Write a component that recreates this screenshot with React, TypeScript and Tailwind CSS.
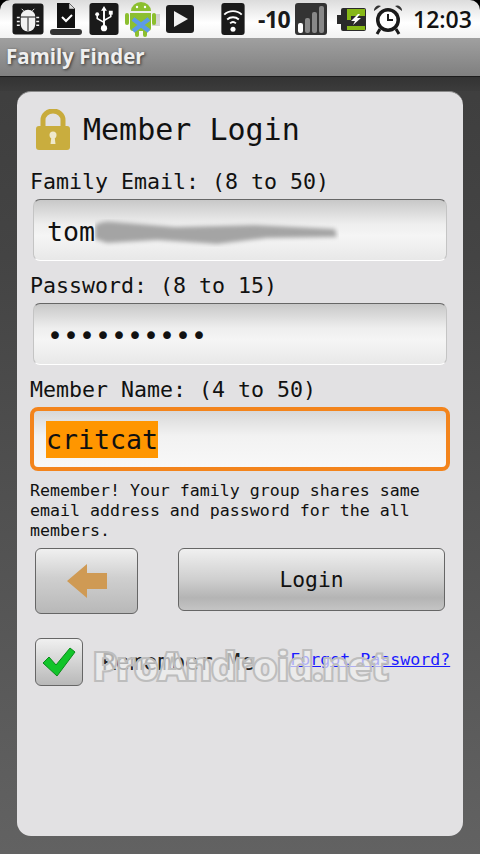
import React from "react";

const MONO = "font-['DejaVu_Sans_Mono','Liberation_Mono',monospace]";
const SANS = "font-['Open_Sans','Noto_Sans',sans-serif]";

function StatusIcons() {
  return (
    <>
      {/* debug bug */}
      <svg width="32" height="32" viewBox="0 0 33 33" className="ml-[12px] shrink-0">
        <rect x="0.5" y="0.5" width="32" height="32" rx="3" fill="#1a1a1a" />
        <path d="M9 14a7.5 7 0 0 1 15 0z" fill="#f2f2f2" />
        <path d="M9 15h15v7a7.5 7.5 0 0 1-15 0z" fill="#f2f2f2" />
        <path d="M12 8l-2-2M21 8l2-2" stroke="#f2f2f2" strokeWidth="1" />
        <path d="M16.5 15v14" stroke="#1a1a1a" strokeWidth="1" />
        <path d="M5 15h3M5 19h3M5 23h3M25 15h3M25 19h3M25 23h3" stroke="#f2f2f2" strokeWidth="1.5" />
      </svg>
      {/* download done */}
      <svg width="32" height="32" viewBox="0 0 32 32" className="ml-[6px] shrink-0">
        <path d="M7 0h12l6 6v19H7z" fill="#111" />
        <path d="M19 0l6 6h-6z" fill="#ddd" stroke="#222" strokeWidth="0.5" />
        <path d="M12 14l4 4 6-6" fill="none" stroke="#fff" strokeWidth="2" />
        <rect x="0" y="26" width="32" height="6" rx="3" fill="#333" />
      </svg>
      {/* usb */}
      <svg width="30" height="32" viewBox="0 0 30 33" className="ml-[7px] shrink-0">
        <rect x="0" y="0" width="30" height="33" rx="3" fill="#1a1a1a" />
        <path d="M15 3l3 5h-2v16h-2V8h-2z" fill="#fff" />
        <circle cx="15" cy="26" r="3.2" fill="#fff" />
        <path d="M15 20l-7-4v-3M15 18l7-4v-3" fill="none" stroke="#fff" strokeWidth="1.6" />
        <circle cx="8" cy="11.5" r="2" fill="#fff" />
        <rect x="20" y="8" width="4" height="4" fill="#fff" />
      </svg>
      {/* android with blue x */}
      <svg width="36" height="38" viewBox="0 0 36 38" className="ml-[5px] shrink-0">
        <path d="M28 14h8v12h-8z" fill="#000" opacity="0.15" />
        <path d="M7 11a10 9 0 0 1 20 0z" fill="#8cbf2f" />
        <path d="M6 13h21v15a3 3 0 0 1-3 3H9a3 3 0 0 1-3-3z" fill="#8cbf2f" />
        <rect x="1" y="13" width="4" height="12" rx="2" fill="#8cbf2f" />
        <rect x="28" y="13" width="4" height="12" rx="2" fill="#8cbf2f" />
        <rect x="11" y="29" width="4" height="8" rx="2" fill="#8cbf2f" />
        <rect x="19" y="29" width="4" height="8" rx="2" fill="#8cbf2f" />
        <circle cx="13" cy="7" r="1.2" fill="#fff" />
        <circle cx="21" cy="7" r="1.2" fill="#fff" />
        <path d="M9 19l16 12M25 19L9 31" stroke="#5c9be8" strokeWidth="4.5" />
      </svg>
      {/* play */}
      <svg width="28" height="28" viewBox="0 0 28 28" className="ml-[6px] shrink-0">
        <rect x="0" y="0" width="28" height="28" rx="3" fill="#1c1c1c" />
        <path d="M8 6l14 8-14 8z" fill="#f2f2f2" />
      </svg>
      {/* wifi */}
      <svg width="24" height="32" viewBox="0 0 24 33" className="ml-[27px] shrink-0">
        <rect x="0" y="0" width="24" height="33" rx="3" fill="#1a1a1a" />
        <path d="M3 12a13 13 0 0 1 18 0M6 17a9 9 0 0 1 12 0M9 21a4.5 4.5 0 0 1 6 0" fill="none" stroke="#fff" strokeWidth="2" />
        <circle cx="12" cy="27" r="2.6" fill="#fff" />
      </svg>
      <span className={`${SANS} ml-[13px] w-[37px] shrink-0 font-bold text-[23px] leading-none text-[#1a1a1a] tracking-[-0.5px]`}>-10</span>
      {/* signal */}
      <svg width="32" height="32" viewBox="0 0 32 32" className="shrink-0">
        <rect x="0" y="0" width="32" height="32" rx="3" fill="#333" />
        <rect x="3" y="20" width="5" height="10" rx="2" fill="#fff" />
        <rect x="10" y="15" width="5" height="15" rx="2" fill="#888" />
        <rect x="17" y="9" width="5" height="21" rx="2" fill="#888" />
        <rect x="24" y="3" width="5" height="27" rx="2" fill="#888" />
      </svg>
      {/* battery charging */}
      <svg width="29" height="23" viewBox="0 0 29 23" className="ml-[10px] shrink-0">
        <path d="M6 0h21a2 2 0 0 1 2 2v19a2 2 0 0 1-2 2H6a2 2 0 0 1-2-2v-5H0V7h4V2a2 2 0 0 1 2-2z" fill="#2a2a2a" />
        <path d="M10 1h18v7H14v4h-4zM10 18h18v4H10z" fill="#86b817" />
        <path d="M21 6l-7 7h4l-2 4 8-7h-4l3-4z" fill="#fff" />
      </svg>
      {/* alarm */}
      <svg width="30" height="32" viewBox="0 0 30 32" className="ml-[7px] shrink-0">
        <path d="M1 8a5 5 0 0 1 7-5zM29 8a5 5 0 0 0-7-5z" fill="#333" />
        <circle cx="15" cy="17" r="12" fill="#1a1a1a" />
        <circle cx="15" cy="17" r="8.5" fill="#fff" />
        <path d="M15 11v6h5" fill="none" stroke="#1a1a1a" strokeWidth="2" />
        <path d="M7 26l-3 5M23 26l3 5" stroke="#1a1a1a" strokeWidth="3" />
      </svg>
      <span className={`${SANS} ml-[10px] font-semibold text-[23px] leading-none text-[#111] whitespace-nowrap`}>12:03</span>
    </>
  );
}

function Field({ label, children, focused }: { label: string; children: React.ReactNode; focused?: boolean }) {
  return (
    <div className="flex flex-col">
      <div className={`${MONO} h-[34px] pl-[13px] text-[21.6px] leading-[34px] text-[#111] whitespace-nowrap`}>{label}</div>
      {focused ? (
        <div className="mx-[13px] h-[64px] rounded-[8px] border-[4px] border-[#f3841c] bg-[linear-gradient(#d8d8d8,#f2f2f2_45%,#f8f8f8)] pl-[12px] flex items-center">
          {children}
        </div>
      ) : (
        <div className="mx-[16px] h-[62px] rounded-[7px] border-t border-t-[#666] border-x border-x-[#c4c4c4] border-b border-b-white bg-[linear-gradient(#c8c8c8,#eeeeee_40%,#f5f5f5_60%,#e8e8e8)] pl-[13px] pt-[4px] flex items-center">
          {children}
        </div>
      )}
    </div>
  );
}

export default function App() {
  return (
    <div className="relative flex h-[854px] w-[480px] flex-col overflow-hidden bg-[linear-gradient(#3c3c3c,#444_30%,#626262)]">
      <div className="relative h-[38px] shrink-0 bg-black">
        <div className="flex h-[38px] items-center rounded-t-[10px] bg-[linear-gradient(#dcdcdc,#ffffff_60%,#f2f2f2)]">
          <StatusIcons />
        </div>
      </div>
      <div className={`${SANS} h-[38px] shrink-0 bg-[linear-gradient(#a0a0a0,#7f7f7f)] pl-[6px] text-[20.5px] font-bold leading-[37px] text-[#efefef] [text-shadow:1px_1px_3px_#333]`}>
        Family Finder
      </div>
      <div className="h-[15px] shrink-0 border-t border-t-[#1c1c1c] bg-[linear-gradient(#333,#3c3c3c)]" />

      <div className="mx-[17px] h-[745px] shrink-0 rounded-[14px] border-t border-t-[#8a8a8a] bg-[#e2e1e3]">
        <div className="flex h-[73px] items-center pl-[18px] pt-[2px]">
          <svg width="36" height="42" viewBox="0 0 36 42" className="shrink-0">
            <path d="M8 20V11a10 9 0 0 1 20 0v9" fill="none" stroke="#c8ab3c" strokeWidth="5" />
            <rect x="1" y="17" width="34" height="24" rx="3" fill="#c9ad3e" />
            <circle cx="18" cy="26" r="3.5" fill="#efe9cc" />
            <path d="M16.5 27h3l1 8h-5z" fill="#efe9cc" />
          </svg>
          <span className={`${MONO} ml-[12px] text-[30px] leading-none text-[#111] whitespace-nowrap`}>Member Login</span>
        </div>

        <div className="flex flex-col gap-[8px]">
          <Field label="Family Email: (8 to 50)">
            <span className={`${MONO} text-[26.6px] leading-none text-[#111]`}>tom</span>
            {/* redacted part of the address */}
            <svg width="244" height="30" viewBox="0 0 244 30" className="shrink-0">
              <defs>
                <filter id="smudge"><feGaussianBlur stdDeviation="2" /></filter>
              </defs>
              <path d="M0 8q8-5 20-3l60 5 80-2 80 4 2 8-70 1-50 6-60-4-50 3-12-4z" fill="#a4a4a4" filter="url(#smudge)" />
            </svg>
          </Field>
          <Field label="Password: (8 to 15)">
            <span className={`${MONO} text-[26.6px] leading-none text-[#111]`}>••••••••••</span>
          </Field>
          <Field label="Member Name: (4 to 50)" focused>
            <span className={`${MONO} bg-[#ff9600] text-[26.6px] leading-[37px] text-[#111]`}>critcat</span>
          </Field>
        </div>

        <p className={`${MONO} mt-[10px] pl-[13px] pr-[20px] text-[16.6px] leading-[20px] text-[#111]`}>
          Remember! Your family group shares same email address and password for the all members.
        </p>

        <div className="mt-[7px] flex items-start pl-[18px]">
          <button className="flex h-[66px] w-[103px] items-center justify-center rounded-[6px] border border-[#666] bg-[linear-gradient(#f0f0f0,#cfcfcf_45%,#b8b8b8)]">
            <svg width="40" height="34" viewBox="0 0 40 34">
              <path d="M0 17L20 0v9h20v16H20v9z" fill="#cf9a54" />
            </svg>
          </button>
          <button className={`${MONO} ml-[40px] h-[63px] w-[267px] rounded-[6px] border border-[#666] bg-[linear-gradient(#f0f0f0,#cfcfcf_50%,#b4b4b4_80%,#c4c4c4)] text-[21.3px] text-[#111]`}>
            Login
          </button>
        </div>

        <div className="mt-[24px] flex items-center pl-[18px]">
          <div className="flex h-[48px] w-[48px] items-center justify-center rounded-[6px] border border-[#666] bg-[linear-gradient(#f0f0f0,#b8b8b8)]">
            <svg width="34" height="30" viewBox="0 0 34 30">
              <path d="M1 16l6-6 7 8L28 1l5 4-18 24z" fill="#12c42a" stroke="#0a8a1a" strokeWidth="1" />
            </svg>
          </div>
          <span className={`${MONO} ml-[19px] text-[23px] leading-none text-[#222] whitespace-nowrap`}>Remember Me</span>
          <a className={`${MONO} ml-[36px] mt-[-3px] text-[16.6px] leading-none text-[#1a1aff] underline whitespace-nowrap`}>Forgot Password?</a>
        </div>
      </div>

      {/* watermark over the page */}
      <div className={`${SANS} pointer-events-none absolute left-[92px] top-[642px] text-[41px] font-extrabold leading-[46px] tracking-[-2px] text-[#f0f0f0]/70 [-webkit-text-stroke:2px_#bdbdbd] whitespace-nowrap`}>
        ProAndroid.net
      </div>
    </div>
  );
}
